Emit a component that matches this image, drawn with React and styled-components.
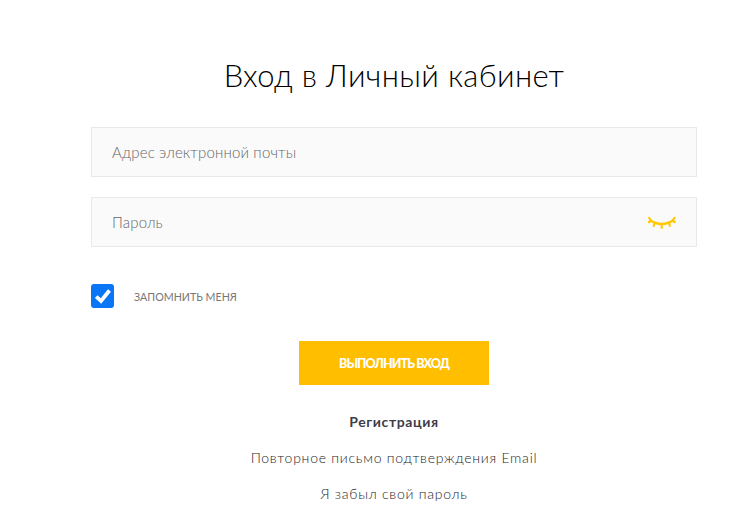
import React from "react";
import styled, { createGlobalStyle } from "styled-components";

const Global = createGlobalStyle`
  html, body { margin: 0; padding: 0; background: #fff; }
  body { font-family: "Lato", "Liberation Sans", sans-serif; }
`;
const Page = styled.div`
  width: 740px; height: 520px; overflow: hidden; box-sizing: border-box;
  padding: 52px 43px 0 91px;
`;
const Title = styled.h1`
  margin: 0 0 29px; font-size: 31px; line-height: 46px; font-weight: 300; color: #000;
  text-align: center; letter-spacing: 0.35px;
`;
const Field = styled.div`
  box-sizing: border-box; height: 50px; margin-bottom: 20px; padding: 0 20px 0 20px;
  display: flex; align-items: center; justify-content: space-between;
  background: #fafafa; border: 1px solid #e9e9e9;
`;
const Placeholder = styled.span`
  font-size: 15px; font-weight: 300; color: #666; letter-spacing: 0.17px;
`;
const Remember = styled.label`
  display: flex; align-items: center; gap: 20px; margin-top: 37px; height: 24px;
`;
const Box = styled.span`
  width: 23px; height: 24px; border-radius: 3px; background: #0a75f5;
  display: flex; align-items: center; justify-content: center;
`;
const RememberText = styled.span`
  font-size: 10.7px; color: #777;
`;
const Submit = styled.button`
  display: block; width: 190px; height: 44px; margin: 33px auto 0; border: 0; padding: 0;
  background: #ffbe00; color: #fff; font: 900 12.5px "Lato", sans-serif; letter-spacing: -0.9px;
`;
const Links = styled.div`
  display: flex; flex-direction: column; align-items: center; gap: 14px; margin-top: 26px;
`;
const LinkText = styled.a`
  font-size: 14px; line-height: 22px; letter-spacing: ${p => (p.$strong ? "0.6px" : "0.75px")};
  color: ${p => (p.$strong ? "#3d3d4a" : "#1d1d28")};
  font-weight: ${p => (p.$strong ? 700 : 300)};
`;

const Eye = () => (
  <svg width="28" height="13" viewBox="0 0 28 13" fill="none" stroke="#ffc800" strokeWidth="2.1">
    <path d="M1.7 4Q13.7 12 25.7 4" strokeWidth="2.6" />
    <path d="M.6 1L3 4.6M0 6.5L3 5M27 1L24.6 4.6M27.6 6.5L24.6 5M13.7 8L13.7 12.8M6.5 6.8L5.5 10.8M21 6.8L22 10.8" />
  </svg>
);

export default function App() {
  return (
    <Page>
      <Global />
      <Title>Вход в Личный кабинет</Title>
      <Field><Placeholder>Адрес электронной почты</Placeholder></Field>
      <Field><Placeholder>Пароль</Placeholder><Eye /></Field>
      <Remember>
        <Box>
          <svg width="16" height="15" viewBox="0 0 16 15" fill="none" stroke="#fff" strokeWidth="3.8">
            <path d="M1.3 7.5L6 12L14.5 1.5" />
          </svg>
        </Box>
        <RememberText>ЗАПОМНИТЬ МЕНЯ</RememberText>
      </Remember>
      <Submit>ВЫПОЛНИТЬ ВХОД</Submit>
      <Links>
        <LinkText $strong>Регистрация</LinkText>
        <LinkText>Повторное письмо подтверждения Email</LinkText>
        <LinkText>Я забыл свой пароль</LinkText>
      </Links>
    </Page>
  );
}
